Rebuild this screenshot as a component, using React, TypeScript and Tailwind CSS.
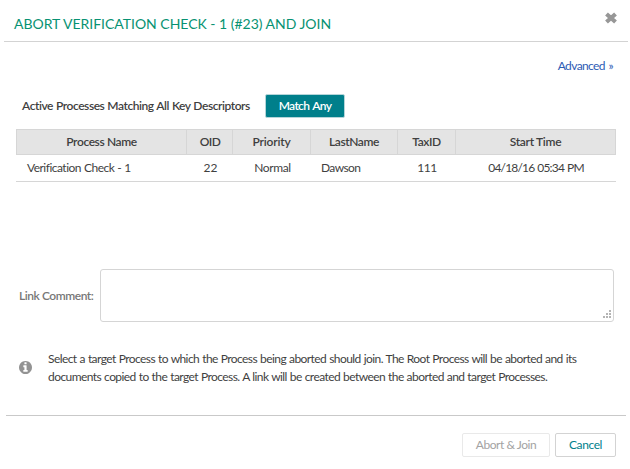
import React from "react";

const columns = [
  { label: "Process Name", value: "Verification Check - 1", width: "w-[171px]", head: "tracking-[-0.4px]", cell: "justify-start pl-[11px] tracking-[-0.52px] [word-spacing:0.5px]" },
  { label: "OID", value: "22", width: "w-[46px]", head: "tracking-[-0.5px] pl-px", cell: "justify-center pl-px" },
  { label: "Priority", value: "Normal", width: "w-[78px]", head: "tracking-[-0.2px]", cell: "justify-center pl-px tracking-[-0.35px]" },
  { label: "LastName", value: "Dawson", width: "w-[87px]", head: "tracking-[-0.4px]", cell: "justify-start pl-[10px] tracking-[-0.6px]" },
  { label: "TaxID", value: "111", width: "w-[58px]", head: "tracking-[-0.45px]", cell: "justify-center tracking-[-0.4px]" },
  { label: "Start Time", value: "04/18/16 05:34 PM", width: "w-[160px]", head: "tracking-[-0.3px]", cell: "justify-center tracking-[-0.8px] [word-spacing:0.6px]" },
];

function CloseIcon() {
  return (
    <svg width="12" height="12" viewBox="0 0 12 12" fill="none" stroke="#979797" strokeWidth="4.2">
      <path d="M1.5 2 10.5 10M10.5 2 1.5 10" />
    </svg>
  );
}

function InfoIcon() {
  return (
    <svg width="13" height="13" viewBox="0 0 1536 1536" fill="#939393">
      <path d="M1024 1248v-160q0-14-9-23t-23-9h-96V544q0-14-9-23t-23-9H544q-14 0-23 9t-9 23v160q0 14 9 23t23 9h96v320h-96q-14 0-23 9t-9 23v160q0 14 9 23t23 9h448q14 0 23-9t9-23zM896 352V192q0-14-9-23t-23-9H672q-14 0-23 9t-9 23v160q0 14 9 23t23 9h192q14 0 23-9t9-23zm640 416q0 209-103 385.500T1153.500 1433 768 1536t-385.500-103T103 1153.500 0 768t103-385.500T382.500 103 768 0t385.500 103T1433 382.500 1536 768z" />
    </svg>
  );
}

export default function App() {
  return (
    <div className="flex h-[469px] w-[630px] flex-col bg-white font-[Lato,sans-serif] text-[12px] leading-[18px] text-[#3f3f3f]">
      <header className="ml-1 mr-0.5 flex h-[42px] shrink-0 justify-between border-b border-[#d3d3d3] pl-[10px] pr-[11px]">
        <h1 className="pt-[15px] text-[14px] font-normal leading-[18px] tracking-[-0.02px] text-[#079272]">
          ABORT VERIFICATION CHECK - 1 (#23) AND JOIN
        </h1>
        <button className="mt-3 h-3" aria-label="Close"><CloseIcon /></button>
      </header>

      <main className="flex h-[373px] shrink-0 flex-col">
        <div className="flex justify-end pr-[17px] pt-[15px]">
          <a className="tracking-[-0.6px] text-[#2d5bb4] [word-spacing:1px]">Advanced »</a>
        </div>

        <div className="mt-[19px] flex h-6 items-center pl-[22px]">
          <span className="w-[243px] whitespace-nowrap font-semibold tracking-[-0.44px] [word-spacing:0.4px]">Active Processes Matching All Key Descriptors</span>
          <button className="h-6 w-20 rounded-[2px] border border-[#b5d5d9] bg-[#007f8b] font-semibold tracking-[-0.65px] text-white [word-spacing:1px]">Match Any</button>
        </div>

        <div className="ml-4 mt-[11px] w-[600px]">
          <div className="flex h-[26px] border border-[#d6d6d6] bg-[#e4e4e4]">
            {columns.map((c) => (
              <div key={c.label} className={`${c.width} ${c.head} flex items-center justify-center whitespace-nowrap border-r border-[#d6d6d6] font-semibold first:w-[170px] last:w-auto last:flex-1 last:border-r-0`}>
                {c.label}
              </div>
            ))}
          </div>
          <div className="flex h-[27px] border-b border-[#d6d6d6]">
            {columns.map((c) => (
              <div key={c.label} className={`${c.width} ${c.cell} flex items-center whitespace-nowrap`}>
                {c.value}
              </div>
            ))}
          </div>
        </div>

        <div className="mt-[87px] flex items-center pl-[19px]">
          <label className="w-[81px] whitespace-nowrap font-semibold tracking-[-0.45px] text-[#777777]">Link Comment:</label>
          <div className="flex h-[53px] w-[514px] items-end justify-end rounded-[3px] border border-[#d5d5d5] p-[2px]">
            <svg width="9" height="9" viewBox="0 0 9 9" fill="#b4b4b4" shapeRendering="crispEdges">
              <path d="M7 0h2v2h-2zM4 3h2v2h-2zM7 3h2v2h-2zM1 6h2v2h-2zM4 6h2v2h-2zM7 6h2v2h-2z" />
            </svg>
          </div>
        </div>

        <div className="mt-7 flex items-center pl-[19px]">
          <div className="pb-px"><InfoIcon /></div>
          <p className="ml-4 whitespace-nowrap tracking-[-0.57px] [word-spacing:0.45px]">
            Select a target Process to which the Process being aborted should join. The Root Process will be aborted and its
            <br />
            documents copied to the target Process. A link will be created between the aborted and target Processes.
          </p>
        </div>
      </main>

      <footer className="ml-1.5 mr-1 flex justify-end gap-[5px] border-t border-[#c9c9c9] pr-[10px] pt-[17px]">
        <button className="h-6 w-[88px] rounded-[2px] border border-[#e9e9e9] tracking-[-0.45px] text-[#a3a3a3]">Abort &amp; Join</button>
        <button className="h-6 w-[61px] rounded-[2px] border border-[#d3d3d3] tracking-[-0.4px] text-[#007f8b]">Cancel</button>
      </footer>
    </div>
  );
}
